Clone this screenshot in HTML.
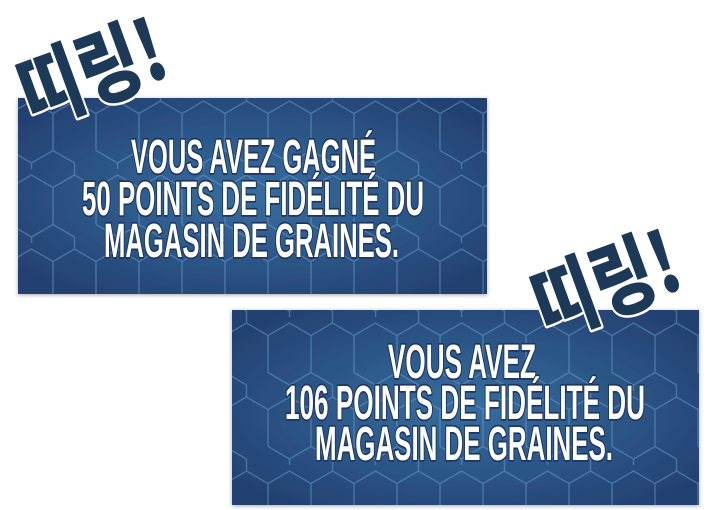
<!DOCTYPE html>
<html><head><meta charset="utf-8"><style>
html,body{margin:0;padding:0;background:#fff;width:720px;height:510px;overflow:hidden}
svg{display:block}
.t{font-family:"Liberation Sans Narrow","Liberation Sans",sans-serif;font-weight:bold;font-size:42px;fill:#fff;stroke:#1d3560;stroke-width:3px;paint-order:stroke;stroke-linejoin:round}
.k{font-family:"Noto Sans CJK KR","NanumGothic",sans-serif;font-weight:900;fill:#1c3a58;stroke:#fff;stroke-width:5px;paint-order:stroke;stroke-linejoin:round}
</style></head><body>
<svg width="720" height="510" viewBox="0 0 720 510" xmlns="http://www.w3.org/2000/svg">
<defs>
<radialGradient id="g1" cx="0.5" cy="0.5" r="0.65">
<stop offset="0" stop-color="#356f9f"/><stop offset="1" stop-color="#233f70"/>
</radialGradient>
<pattern id="hex" width="86" height="74" patternUnits="userSpaceOnUse" x="10" y="95">
<path d="M0 18.5 L21.5 6 L43 18.5 L43 55.5 L21.5 68 M43 18.5 L64.5 6 L86 18.5 M43 55.5 L64.5 68 M64.5 6 L64.5 -12 M64.5 68 L64.5 86 M0 55.5 L21.5 68 L21.5 86 M86 18.5 L86 55.5 M0 18.5 L0 55.5" fill="none" stroke="#6a9fd0" stroke-opacity="0.5" stroke-width="1.4"/>
</pattern>
<filter id="sh" x="-5%" y="-5%" width="110%" height="115%"><feDropShadow dx="0" dy="1" stdDeviation="2" flood-color="#000" flood-opacity="0.35"/></filter>
</defs>
<rect x="18" y="98" width="469" height="196" fill="url(#g1)" filter="url(#sh)"/>
<rect x="18" y="98" width="469" height="196" fill="url(#hex)"/>
<rect x="232" y="310" width="467" height="195" fill="url(#g1)" filter="url(#sh)"/>
<rect x="232" y="310" width="467" height="195" fill="url(#hex)"/>
<text class="t" x="131" y="0" textLength="245" lengthAdjust="spacingAndGlyphs" transform="translate(0,173) scale(1,1.15)">VOUS AVEZ GAGNÉ</text>
<text class="t" x="82" y="0" textLength="342" lengthAdjust="spacingAndGlyphs" transform="translate(0,215) scale(1,1.15)">50 POINTS DE FIDÉLITÉ DU</text>
<text class="t" x="104" y="0" textLength="295" lengthAdjust="spacingAndGlyphs" transform="translate(0,257) scale(1,1.15)">MAGASIN DE GRAINES.</text>
<text class="t" x="388" y="0" textLength="148" lengthAdjust="spacingAndGlyphs" transform="translate(0,378) scale(1,1.15)">VOUS AVEZ</text>
<text class="t" x="285" y="0" textLength="360" lengthAdjust="spacingAndGlyphs" transform="translate(0,419) scale(1,1.15)">106 POINTS DE FIDÉLITÉ DU</text>
<text class="t" x="315" y="0" textLength="298" lengthAdjust="spacingAndGlyphs" transform="translate(0,460) scale(1,1.15)">MAGASIN DE GRAINES.</text>
<text class="k" font-size="84" textLength="150" lengthAdjust="spacingAndGlyphs" transform="translate(32,126) rotate(-20)">띠링!</text>
<text class="k" font-size="84" textLength="150" lengthAdjust="spacingAndGlyphs" transform="translate(546,338) rotate(-20)">띠링!</text>
</svg>
</body></html>
